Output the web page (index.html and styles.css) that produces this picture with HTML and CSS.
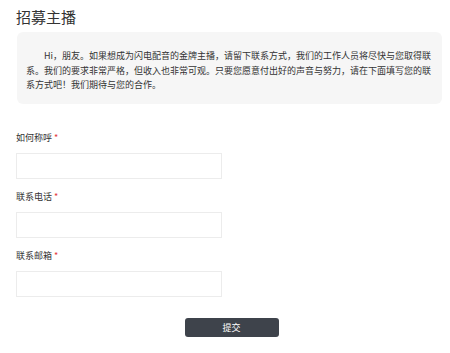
FILE: index.html
```html
<!DOCTYPE html>
<html lang="zh-CN">
<head>
    <meta charset="UTF-8">
    <meta name="viewport" content="width=device-width, initial-scale=1.0">
    <title>招募主播</title>
    <link rel="stylesheet" href="styles.css">
</head>
<body>
    <div class="page">
        <h1 class="title">招募主播</h1>
        <div class="intro">
            <p>Hi，朋友。如果想成为闪电配音的金牌主播，请留下联系方式，我们的工作人员将尽快与您取得联系。我们的要求非常严格，但收入也非常可观。只要您愿意付出好的声音与努力，请在下面填写您的联系方式吧！我们期待与您的合作。</p>
        </div>
        <form class="form">
            <div class="field">
                <label class="label" for="name">如何称呼 <span class="req">*</span></label>
                <input type="text" class="input" id="name" name="name" />
            </div>
            <div class="field">
                <label class="label" for="phone">联系电话 <span class="req">*</span></label>
                <input type="text" class="input" id="phone" name="phone" />
            </div>
            <div class="field">
                <label class="label" for="email">联系邮箱 <span class="req">*</span></label>
                <input type="text" class="input" id="email" name="email" />
            </div>
            <div class="actions">
                <button class="submit" type="button">提交</button>
            </div>
        </form>
    </div>
</body>
</html>
```

FILE: styles.css
```css
body {
    margin: 0;
    background-color: #fff;
    color: #333;
    font-family: "Noto Sans CJK SC", "Noto Sans", sans-serif;
}

.page {
    width: 426px;
    padding: 0 8px 0 16px;
}

.title {
    margin: 0;
    padding-top: 7px;
    height: 25px;
    font-size: 15px;
    font-weight: normal;
    line-height: 20px;
    color: #333;
}

.intro {
    margin-left: 1px;
    padding: 17px 9px 10px 9px;
    background-color: #f6f6f6;
    border-radius: 6px;
    height: 45px;
}

.intro p {
    margin: 0;
    font-size: 9px;
    line-height: 14.5px;
    text-indent: 2em;
    color: #333;
}

.form {
    padding-top: 27px;
}

.field {
    margin-bottom: 11px;
}

.label {
    display: block;
    font-size: 9px;
    line-height: 14px;
    margin-bottom: 8px;
    color: #333;
}

.req {
    color: #e4393c;
}

.input {
    display: block;
    box-sizing: border-box;
    width: 206px;
    height: 26px;
    border: 1px solid #ececec;
    border-radius: 0;
    background-color: #fff;
    outline: none;
}

.actions {
    display: flex;
    justify-content: center;
    padding: 10px 0 0 5px;
}

.submit {
    width: 94px;
    height: 19px;
    padding: 0;
    border: none;
    border-radius: 3px;
    background-color: #3e434b;
    color: #fff;
    font-family: "Noto Sans CJK SC", "Noto Sans", sans-serif;
    font-size: 9px;
    cursor: pointer;
}
```
